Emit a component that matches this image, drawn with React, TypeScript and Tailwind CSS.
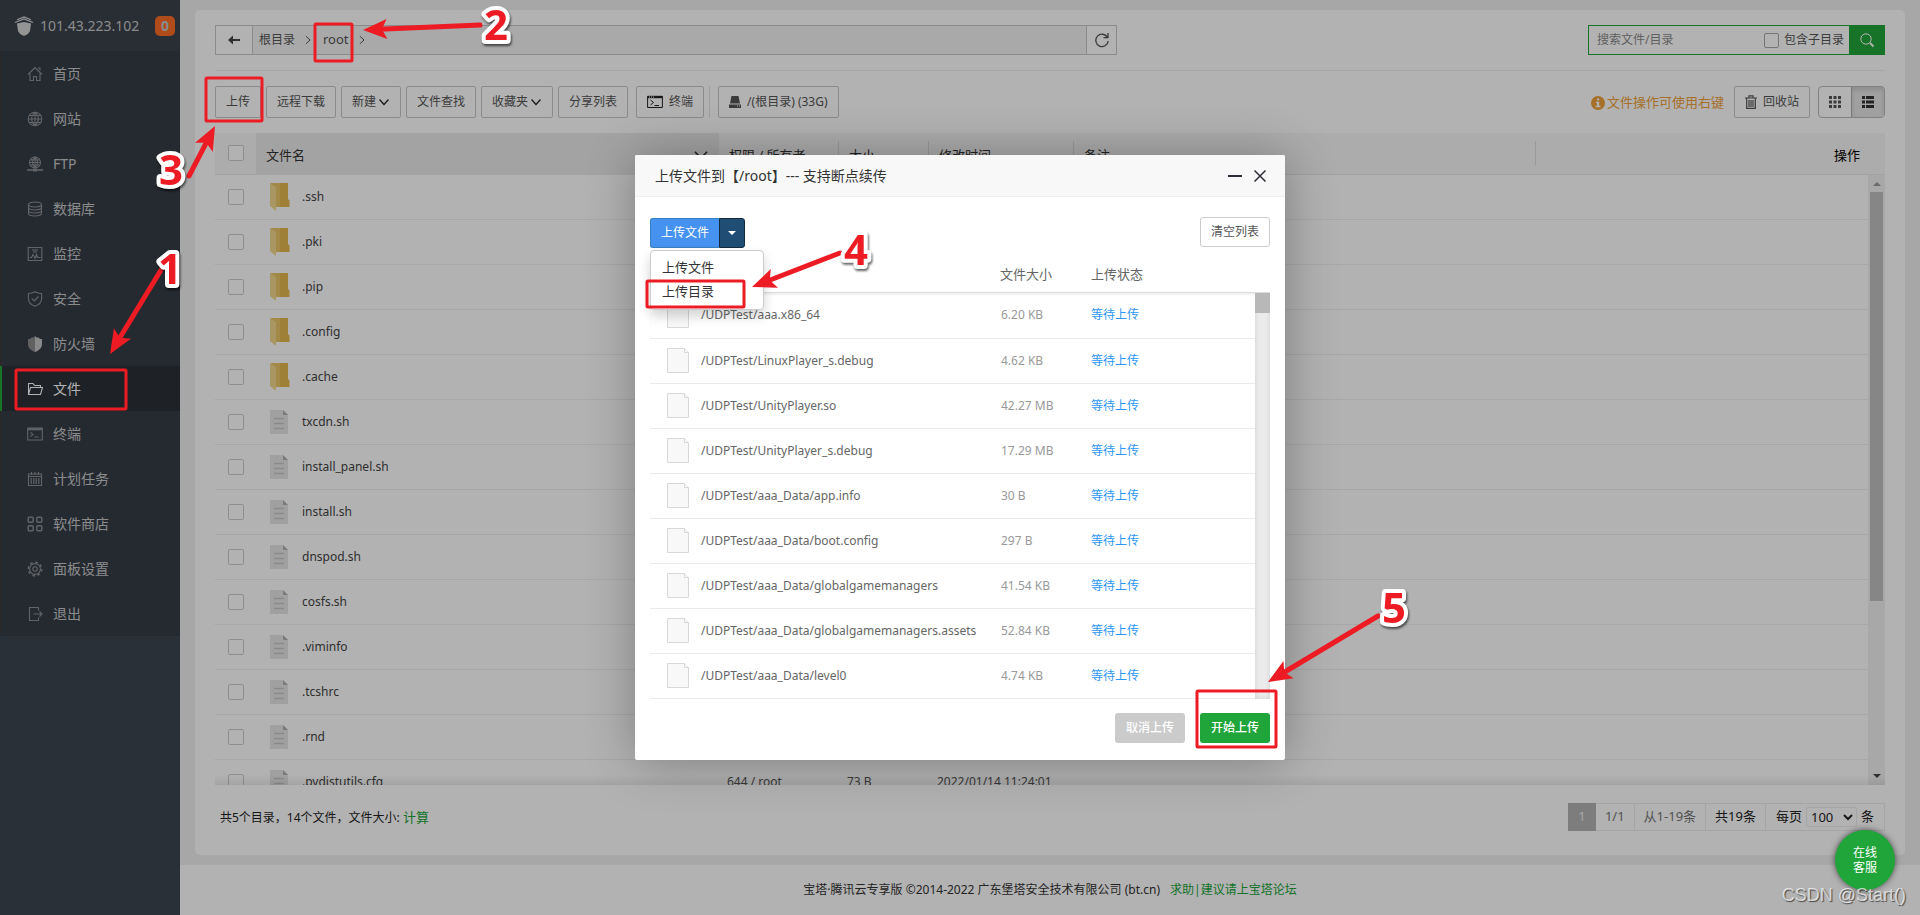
import { useState } from 'react';
import type { ReactNode } from 'react';
import { clsx } from 'clsx';

const menu = [
  { name: '首页', icon: 'home' },
  { name: '网站', icon: 'site' },
  { name: 'FTP', icon: 'ftp' },
  { name: '数据库', icon: 'database' },
  { name: '监控', icon: 'monitor' },
  { name: '安全', icon: 'safe' },
  { name: '防火墙', icon: 'firewall' },
  { name: '文件', icon: 'files' },
  { name: '终端', icon: 'terminal' },
  { name: '计划任务', icon: 'cron' },
  { name: '软件商店', icon: 'store' },
  { name: '面板设置', icon: 'settings' },
  { name: '退出', icon: 'exit' },
];

type FileRow = { name: string; dir?: boolean; owner?: string; size?: string; time?: string };

const files: FileRow[] = [
  { name: '.ssh', dir: true },
  { name: '.pki', dir: true },
  { name: '.pip', dir: true },
  { name: '.config', dir: true },
  { name: '.cache', dir: true },
  { name: 'txcdn.sh' },
  { name: 'install_panel.sh' },
  { name: 'install.sh' },
  { name: 'dnspod.sh' },
  { name: 'cosfs.sh' },
  { name: '.viminfo' },
  { name: '.tcshrc' },
  { name: '.rnd' },
  { name: '.pydistutils.cfg', owner: '644 / root', size: '73 B', time: '2022/01/14 11:24:01' },
];

const uploads = [
  { path: '/UDPTest/aaa.x86_64', size: '6.20 KB' },
  { path: '/UDPTest/LinuxPlayer_s.debug', size: '4.62 KB' },
  { path: '/UDPTest/UnityPlayer.so', size: '42.27 MB' },
  { path: '/UDPTest/UnityPlayer_s.debug', size: '17.29 MB' },
  { path: '/UDPTest/aaa_Data/app.info', size: '30 B' },
  { path: '/UDPTest/aaa_Data/boot.config', size: '297 B' },
  { path: '/UDPTest/aaa_Data/globalgamemanagers', size: '41.54 KB' },
  { path: '/UDPTest/aaa_Data/globalgamemanagers.assets', size: '52.84 KB' },
  { path: '/UDPTest/aaa_Data/level0', size: '4.74 KB' },
];

const menuIcons: Record<string, ReactNode> = {
  home: <path d="M1 8.5 8 1.5l7 7M3 7.5v7h3.5v-4h3v4H13v-7M11 2h2v2.5" />,
  site: <path d="M8 1.2a6.8 6.8 0 1 0 0 13.6A6.8 6.8 0 0 0 8 1.2ZM1.2 8h13.6M2.5 4.5h11M2.5 11.5h11M8 1.2v13.6M8 1.2c-4.5 4-4.5 9.6 0 13.6M8 1.2c4.5 4 4.5 9.6 0 13.6" />,
  ftp: (
    <>
      <path d="M8 1a5.5 5.5 0 1 0 0 11A5.5 5.5 0 0 0 8 1ZM2.5 6.5h11M3.5 4h9M3.5 9h9M8 1v11M8 1c-3.5 3.5-3.5 7.5 0 11M8 1c3.5 3.5 3.5 7.5 0 11" />
      <path d="M0 14h16" strokeWidth="1.6" />
      <path d="M6 14h4" strokeWidth="3" />
    </>
  ),
  database: <path d="M8 1C4.5 1 1.5 2 1.5 3.5S4.5 6 8 6s6.5-1 6.5-2.5S11.5 1 8 1ZM1.5 3.5v9C1.5 14 4.5 15 8 15s6.5-1 6.5-2.5v-9M1.5 6.5C1.5 8 4.5 9 8 9s6.5-1 6.5-2.5M1.5 9.5C1.5 11 4.5 12 8 12s6.5-1 6.5-2.5" />,
  monitor: <path d="M1.2 1.5h13.6v13H1.2ZM2.5 11.5h2l1.5-3 2 4 1.5-4 1 3h3M5 4h6M6 6h4" />,
  safe: <path d="M8 .8c2 1.2 4.5 1.7 6.6 1.7v5c0 3.800-3 6.500-6.600 7.700-3.600-1.200-6.600-3.900-6.600-7.700v-5C3.500 2.500 6 2 8 .8ZM4.800 7.500 7.300 10l4.200-4.500" />,
  firewall: (
    <>
      <path d="M8 0 6.500 1.500h-2L3 3H1v5c0 4 3 6.500 7 8Z" fill="#8b8b8b" stroke="none" />
      <path d="m8 0 1.500 1.500h2L13 3h2v5c0 4-3 6.500-7 8Z" fill="#c4c4c4" stroke="none" />
    </>
  ),
  files: <path d="M1.5 13.5V2.5H6l1.5 2h6v2M1.5 13.5l2-7h12l-2 7Z" />,
  terminal: (
    <>
      <path d="M.7 2h14.6v12H.7ZM3.5 6.5 6 8.5l-2.5 2M7.5 11h4" />
      <path d="M.7 3.2h14.6" strokeWidth="2.2" />
    </>
  ),
  cron: (
    <>
      <path d="M1.5 3h13v11.500h-13ZM1.500 5.500h13M4.500 1v3M8 1v3M11.500 1v3" />
      <path d="M3.500 8h9M3.500 10h9M3.500 12h9" strokeDasharray="1.500 1" strokeWidth="1.300" />
    </>
  ),
  store: (
    <g strokeWidth="1.4">
      <rect x="1.2" y="1.2" width="5" height="5" rx="1" />
      <rect x="9.8" y="1.2" width="5" height="5" rx="1" />
      <rect x="1.2" y="9.8" width="5" height="5" rx="1" />
      <rect x="9.8" y="9.8" width="5" height="5" rx="1" />
    </g>
  ),
  settings: (
    <>
      <circle cx="8" cy="8" r="5.4" />
      <circle cx="8" cy="8" r="2.2" />
      <circle cx="8" cy="8" r="6.7" strokeWidth="1.6" strokeDasharray="2.6 2.66" />
    </>
  ),
  exit: <path d="M11.5 4.5v-3h-9v13h9v-3M6.5 8H15M12.5 5.5 15 8l-2.5 2.5" />,
};

function MenuIcon({ name }: { name: string }) {
  return (
    <svg className="w-4 h-4 shrink-0" viewBox="0 0 16 16" fill="none" stroke="currentColor" strokeWidth="1.1">
      {menuIcons[name]}
    </svg>
  );
}

function Chevron({ className }: { className?: string }) {
  return (
    <svg className={clsx('shrink-0', className)} viewBox="0 0 12 12" fill="none" stroke="currentColor" strokeWidth="1.2">
      <path d="m1.5 3.5 4.5 5 4.5-5" />
    </svg>
  );
}

function FolderIcon() {
  return (
    <svg className="w-5 h-7" viewBox="0 0 20 28">
      <path d="M1 0h17v16l1.500 1.500V24H5Z" fill="#e2b84f" />
      <path d="M1 0h9v24H5Z" fill="#e8c567" />
      <path d="M0 0l6 4v24l-6-5Z" fill="#f3d88e" />
    </svg>
  );
}

function FileIcon() {
  return (
    <svg className="w-[18px] h-6" viewBox="0 0 18 24">
      <path d="M0 0h13l5 5v19H0Z" fill="#e6e6e6" />
      <path d="M13 0v5h5Z" fill="#b0b0b0" />
      <path d="M4 8.500h10M4 13.500h10M4 18.500h10" stroke="#c6c6c6" strokeWidth="1.400" />
    </svg>
  );
}

function BlankFileIcon() {
  return (
    <svg className="w-6 h-[25px]" viewBox="0 0 24 25" fill="#f8f8f8" stroke="#d8d8d8">
      <path d="M1.500.5h17l4 4v20h-21Z" />
      <path d="M18.500.5v4h4" />
    </svg>
  );
}

function TerminalIcon() {
  return (
    <svg className="w-4 h-4" viewBox="0 0 16 16" fill="none" stroke="#222">
      <path d="M.6 2.500h14.800v11H.6ZM3.500 6l3 2.500-3 2.500M7.500 11.500h4.500" />
      <path d="M.6 3h14.800" strokeWidth="2.400" />
      <path d="M2 3h1M4 3h1M6 3h1" stroke="#fff" />
    </svg>
  );
}

function DiskIcon() {
  return (
    <svg className="w-3 h-3" viewBox="0 0 12 12" fill="#555">
      <path d="M2.500 0h7L11 7.500H1ZM0 8.500h12V12H0Z" />
      <path d="M8 10h1M10 10h1" stroke="#fff" />
    </svg>
  );
}

function ToolButton({ children }: { children: ReactNode }) {
  return (
    <button className="h-8 px-[10px] flex items-center justify-center gap-[6px] border border-[#c8c8c8] rounded-xs bg-white text-xs text-[#555] whitespace-nowrap">
      {children}
    </button>
  );
}

const checkbox = 'block appearance-none w-4 h-4 border border-[#ccc] rounded-xs bg-white checked:bg-[#20a53a]';

function Sidebar() {
  return (
    <aside className="w-[180px] shrink-0 bg-[#3d4551] text-[#c8c8c8] text-sm">
      <div className="h-[51px] px-[5px] flex items-center bg-[#3c424c]">
        <svg className="w-5 h-5 ml-[9px]" viewBox="0 0 20 20" fill="#d5d5d5">
          <path d="M3 7.500 10 6l7 1.500L16 15c-1 2-3 4-6 5-3-1-5-3-6-5Z" />
          <path d="M1 6.500 10 3l9 3.500M3 3.800 10 1l7 2.800" fill="none" stroke="#d5d5d5" strokeWidth="1.200" />
        </svg>
        <span className="ml-[6px]">101.43.223.102</span>
        <span className="ml-auto w-5 h-5 rounded-[5px] bg-[#fc6d26] text-center leading-5 font-bold">0</span>
      </div>
      <nav>
        {menu.map(item => (
          <a key={item.name} href="#" className={clsx(
            'h-[45px] flex items-center gap-[10px] border-l-2',
            item.name === '文件' ? 'bg-[#2c3036] border-[#20a53a] text-white' : 'bg-[#363c46] border-[#3b3c40]',
          )}>
            <span className={clsx('pl-[25px]', item.name !== '文件' && 'text-[#8d8f92]')}><MenuIcon name={item.icon} /></span>
            {item.name}
          </a>
        ))}
      </nav>
    </aside>
  );
}

function PathBar() {
  const [search, setSearch] = useState('');
  return (
    <div className="flex items-center justify-between pb-[15px] border-b border-[#f0f0f0]">
      <div className="w-[902px] h-[30px] flex border border-[#c8c8c8] bg-[#f3f3f3] text-xs text-[#555]">
        <button className="w-[37px] bg-white border-r border-[#c8c8c8] flex items-center justify-center" aria-label="Back">
          <svg className="w-3 h-3" viewBox="0 0 12 12" fill="#444"><path d="M0 6 5 1.500V5h7v2H5v3.500Z" /></svg>
        </button>
        <div className="flex-1 flex items-center">
          <a href="#" className="pl-[6px]">根目录</a>
          <Chevron className="w-[10px] h-[10px] -rotate-90 ml-2 mr-[10px]" />
          <a href="#" className="text-[13px]">root</a>
          <Chevron className="w-[10px] h-[10px] -rotate-90 ml-2" />
        </div>
        <button className="w-[30px] bg-white border-l border-[#c8c8c8] flex items-center justify-center" aria-label="Refresh">
          <svg className="w-4 h-4" viewBox="0 0 16 16" fill="none" stroke="#555" strokeWidth="1.300">
            <path d="M13.500 5.500A6.200 6.200 0 1 0 14.200 9M14 1v4.700H9.500" />
          </svg>
        </button>
      </div>
      <div className="w-[297px] h-[30px] flex items-center border border-[#20a53a] text-xs text-[#555]">
        <input type="text" aria-label="搜索文件/目录" placeholder="搜索文件/目录" value={search} onChange={e => setSearch(e.target.value)}
          className="flex-1 min-w-0 pl-2 outline-none placeholder:text-[#8a8a8a]" />
        <label className="flex items-center gap-[5px] pr-[5px] whitespace-nowrap">
          <input type="checkbox" className="appearance-none w-[15px] h-[15px] border border-[#aaa] rounded-xs bg-white" />
          包含子目录
        </label>
        <button className="w-[35px] h-7 bg-[#20a53a] flex items-center justify-center" aria-label="Search">
          <svg className="w-4 h-4" viewBox="0 0 16 16" fill="none" stroke="#fff">
            <circle cx="7" cy="7" r="5.200" />
            <path d="m11 11 3.500 3.500" strokeWidth="2" />
          </svg>
        </button>
      </div>
    </div>
  );
}

function Toolbar() {
  return (
    <div className="py-[15px] flex items-center gap-[5px]">
      <ToolButton>上传</ToolButton>
      <ToolButton>远程下载</ToolButton>
      <ToolButton>新建<Chevron className="w-3 h-3 -ml-1 text-[#222]" /></ToolButton>
      <ToolButton>文件查找</ToolButton>
      <ToolButton>收藏夹<Chevron className="w-3 h-3 -ml-1 text-[#222]" /></ToolButton>
      <ToolButton>分享列表</ToolButton>
      <div className="ml-[3px] pr-[5px] mr-[3px] border-r border-[#e4e4e4]">
        <ToolButton><TerminalIcon />终端</ToolButton>
      </div>
      <ToolButton><DiskIcon />/(根目录) (33G)</ToolButton>
      <div className="ml-auto mr-[5px] pt-[2px] flex items-center gap-[2px] text-[13px] text-[#f0a13a]">
        <svg className="w-[14px] h-[14px]" viewBox="0 0 14 14">
          <circle cx="7" cy="7" r="7" fill="currentColor" />
          <path d="M6 2.500h2.200v2H6ZM5 5.800h3.200v4H9.500v1.400h-5V9.800H6V7.200H5Z" fill="#fff" />
        </svg>
        文件操作可使用右键
      </div>
      <ToolButton>
        <svg className="w-3 h-[14px]" viewBox="0 0 12 14" fill="none" stroke="#555" strokeWidth="1.200">
          <path d="M0 3h12M4 3V.8h4V3M1.700 3v10.300h8.600V3M4 5v7M6 5v7M8 5v7" />
        </svg>
        回收站
      </ToolButton>
      <div className="ml-[3px] h-8 flex border border-[#bbb] rounded-sm">
        <button className="w-8 flex items-center justify-center" aria-label="Icon view">
          <svg className="w-3 h-3" viewBox="0 0 12 12" stroke="#555" strokeWidth="3" strokeDasharray="3 1.500"><path d="M0 1.500h12M0 6h12M0 10.500h12" /></svg>
        </button>
        <button className="w-[33px] flex items-center justify-center bg-[#e6e6e6] border-l border-[#adadad] shadow-[inset_0_3px_5px_rgba(0,0,0,0.125)]" aria-label="List view">
          <svg className="w-3 h-3" viewBox="0 0 12 12" stroke="#333" strokeWidth="3"><path d="M0 1.500h3M4 1.500h8M0 6h3M4 6h8M0 10.500h3M4 10.500h8" /></svg>
        </button>
      </div>
    </div>
  );
}

const headCell = 'border-r border-[#ddd] h-[25px] pt-1 pl-[10px] flex items-center';

function FileTable() {
  return (
    <div className="flex-1 min-h-0 flex flex-col">
      <table className="w-full table-fixed text-[13px] text-[#333]">
        <thead>
          <tr className="h-[41px] bg-[#f6f6f6] border-b border-[#e8e8e8] text-left">
            <th className="w-[41px] font-normal"><input type="checkbox" aria-label="Select all" className={clsx(checkbox, 'ml-[13px]')} /></th>
            <th className="w-[463px] font-normal bg-[#eaeaea] px-[10px]">
              <div className="pt-1 flex items-center justify-between">文件名<Chevron className="w-4 h-4" /></div>
            </th>
            <th className="w-[120px] font-normal"><div className={headCell}>权限 / 所有者</div></th>
            <th className="w-[90px] font-normal"><div className={headCell}>大小</div></th>
            <th className="w-[145px] font-normal"><div className={headCell}>修改时间</div></th>
            <th className="w-[462px] font-normal"><div className={headCell}>备注</div></th>
            <th className="pt-1 pr-[25px] text-right font-normal text-black">操作</th>
          </tr>
        </thead>
      </table>
      <div className="relative flex-1 min-h-0 flex overflow-hidden">
        <div className="flex-1 overflow-hidden">
          <table className="w-full table-fixed text-xs text-[#555]">
            <tbody>
              {files.map(f => (
                <tr key={f.name} className="h-[45px] border-b border-[#f0f0f0]">
                  <td className="w-[41px]"><input type="checkbox" aria-label={f.name} className={clsx(checkbox, 'ml-[13px]')} /></td>
                  <td className="w-[463px]">
                    <div className="flex items-center">
                      <span className="w-[46px] pl-[14px] shrink-0">{f.dir ? <FolderIcon /> : <FileIcon />}</span>
                      <a href="#" className="text-[#444]">{f.name}</a>
                    </div>
                  </td>
                  <td className="w-[120px] pl-2">{f.owner}</td>
                  <td className="w-[90px] pl-2">{f.size}</td>
                  <td className="w-[145px] pl-2">{f.time}</td>
                  <td />
                </tr>
              ))}
            </tbody>
          </table>
        </div>
        <div className="w-[17px] bg-[#f1f1f1] flex flex-col items-center">
          <svg className="w-2 h-[17px]" viewBox="0 0 8 17" fill="#999"><path d="m4 7 4 4H0Z" /></svg>
          <div className="w-[13px] flex-1"><div className="h-[71%] bg-[#c1c1c1]" /></div>
          <svg className="w-2 h-[17px]" viewBox="0 0 8 17" fill="#444"><path d="M0 6h8l-4 4Z" /></svg>
        </div>
        <div className="absolute inset-x-0 bottom-0 h-[10px] bg-linear-to-t from-black/8 to-transparent" />
      </div>
    </div>
  );
}

function Pager() {
  const cell = 'px-[9px] flex items-center border-r border-[#ececec]';
  return (
    <div className="h-[70px] pb-[6px] flex items-center justify-between text-[#222]">
      <p className="pl-[5px] pt-[1px] text-xs">共5个目录，14个文件，文件大小: <a href="#" className="text-[13px] text-[#20a53a]">计算</a></p>
      <div className="h-7 flex border border-r-0 border-[#ececec] text-[13px] text-[#777]">
        <span className="w-7 -m-px mr-0 flex items-center justify-center bg-[#b4b4b4] text-[#eee]">1</span>
        <span className={cell}>1/1</span>
        <span className={cell}>从1-19条</span>
        <span className={clsx(cell, 'text-[#222]')}>共19条</span>
        <label className="px-[10px] flex items-center gap-1 border-r border-[#ececec] text-[#222]">
          每页
          <span className="relative flex items-center">
            <select defaultValue="100" className="appearance-none w-[51px] h-5 pl-1 border border-[#ececec] rounded-xs">
              <option>100</option>
            </select>
            <svg className="absolute right-1 w-[10px] h-[10px] pointer-events-none" viewBox="0 0 10 10" fill="none" stroke="#222" strokeWidth="2"><path d="m1 3 4 4 4-4" /></svg>
          </span>
          条
        </label>
      </div>
    </div>
  );
}

function UploadDialog() {
  return (
    <div role="dialog" className="w-[650px] h-[605px] flex flex-col bg-white rounded-xs shadow-[1px_1px_50px_rgba(0,0,0,0.3)]">
      <div className="h-[42px] pt-px pl-5 pr-[19px] flex items-center bg-[#f8f8f8] border-b border-[#eee] rounded-t-xs text-sm text-[#333]">
        <h2 className="flex-1">上传文件到【/root】--- 支持断点续传</h2>
        <button className="w-[14px] h-[14px] flex items-center" aria-label="Minimize"><span className="w-full h-[2px] bg-[#2e2d3c]" /></button>
        <button className="ml-3" aria-label="Close">
          <svg className="w-3 h-3" viewBox="0 0 12 12" stroke="#2e2d3c" strokeWidth="1.500"><path d="m.5.5 11 11M11.500.5l-11 11" /></svg>
        </button>
      </div>
      <div className="flex-1 px-[15px] pt-5 flex flex-col">
        <div className="flex justify-between">
          <div className="relative h-[30px] mt-px flex text-xs text-white">
            <button className="w-[69px] bg-[#4592f0] border border-r-0 border-[#3580be] rounded-l-[3px]">上传文件</button>
            <button className="w-[26px] flex items-center justify-center bg-[#204d74] border border-[#122b40] rounded-r-[3px]" aria-label="More">
              <svg className="w-2 h-1" viewBox="0 0 8 4" fill="#fff"><path d="M0 0h8L4 4Z" /></svg>
            </button>
            <ul className="absolute z-10 left-0 top-8 w-[114px] h-[60px] pt-1 bg-white border border-[#ccc] rounded-sm shadow-[0_6px_12px_rgba(0,0,0,0.175)] text-[13px] leading-6 text-[#333]">
              <li><a href="#" className="block px-[11px]">上传文件</a></li>
              <li><a href="#" className="block px-[11px]">上传目录</a></li>
            </ul>
          </div>
          <button className="h-[30px] w-[70px] border border-[#ccc] rounded-[3px] text-xs text-[#555]">清空列表</button>
        </div>
        <div className="h-[45px] pt-[10px] flex items-center border-b border-[#ddd] text-[13px] text-[#666]">
          <span className="w-[441px] pl-[350px]">文件大小</span>
          <span>上传状态</span>
        </div>
        <div className="flex shadow-[inset_0_2px_2px_rgba(0,0,0,0.06)]">
          <table className="flex-1 table-fixed text-xs text-[#666]">
            <tbody>
              {uploads.map(u => (
                <tr key={u.path} className="h-[45px] border-b border-[#ebebeb]">
                  <td className="w-[351px]">
                    <div className="pl-4 flex items-center gap-[11px] whitespace-nowrap"><BlankFileIcon />{u.path}</div>
                  </td>
                  <td className="w-[90px] text-[#999]">{u.size}</td>
                  <td className="w-[164px] text-[#2d96f5]">等待上传</td>
                </tr>
              ))}
            </tbody>
          </table>
          <div className="w-[15px] bg-[#ebebeb] shadow-[inset_0_0_5px_rgba(0,0,0,0.12)]">
            <div className="h-5 bg-[#b8b8b8]" />
          </div>
        </div>
        <div className="mt-[14px] flex justify-end gap-[15px] text-xs font-medium text-white">
          <button className="w-[70px] h-[30px] rounded-[3px] bg-[#cbcbcb]">取消上传</button>
          <button className="w-[70px] h-[30px] rounded-[3px] bg-[#20a53a]">开始上传</button>
        </div>
      </div>
    </div>
  );
}

// numbered steps drawn over the page
const steps = [
  { n: '1', x: 158, y: 284, box: [16, 370, 110, 39], from: [161, 270], to: [110, 354] },
  { n: '2', x: 484, y: 40, box: [315, 24, 37, 37], from: [480, 25], to: [363, 30] },
  { n: '3', x: 159, y: 185, box: [206, 78, 56, 43], from: [189, 176], to: [215, 126] },
  { n: '4', x: 844, y: 265, box: [647, 281, 97, 26], from: [840, 253], to: [752, 287] },
  { n: '5', x: 1382, y: 623, box: [1197, 691, 79, 56], from: [1378, 616], to: [1268, 682] },
];

function Steps() {
  return (
    <svg className="absolute z-20 inset-0 w-[1920px] h-[915px] pointer-events-none" viewBox="0 0 1920 915" fill="none" stroke="#ed1c24">
      {steps.map(s => {
        const [x1, y1] = s.from;
        const [x2, y2] = s.to;
        const len = Math.hypot(x2 - x1, y2 - y1);
        const angle = (Math.atan2(y2 - y1, x2 - x1) * 180) / Math.PI;
        return (
          <g key={s.n}>
            <rect x={s.box[0]} y={s.box[1]} width={s.box[2]} height={s.box[3]} strokeWidth="3" rx="1" />
            <g transform={`translate(${x1} ${y1}) rotate(${angle})`}>
              <path d={`M0 0H${len - 16}`} strokeWidth="5" strokeLinecap="round" />
              <path d={`M${len} 0l-24 -10 5 10 -5 10Z`} fill="#ed1c24" stroke="none" />
            </g>
            <text x={s.x} y={s.y} fontSize="42" fill="#ed1c24" stroke="#fff" strokeWidth="8" strokeLinejoin="round" paintOrder="stroke"
              className="font-bold drop-shadow-[1px_2px_1px_rgba(0,0,0,0.6)]">{s.n}</text>
          </g>
        );
      })}
    </svg>
  );
}

export default function App() {
  return (
    <div className="relative h-screen flex overflow-hidden bg-[#f0f0f1] font-['Noto_Sans','Noto_Sans_CJK_SC',sans-serif]">
      <Sidebar />
      <div className="flex-1 min-w-0 flex flex-col">
        <main className="flex-1 min-h-0 mx-[15px] my-[10px] px-5 pt-[15px] flex flex-col bg-white rounded-[5px]">
          <PathBar />
          <Toolbar />
          <FileTable />
          <Pager />
        </main>
        <footer className="h-[50px] flex items-center justify-center gap-[10px] bg-white text-xs text-[#333]">
          <span>宝塔·腾讯云专享版 ©2014-2022 广东堡塔安全技术有限公司 (bt.cn)</span>
          <a href="#" className="text-[#20a53a]">求助|建议请上宝塔论坛</a>
        </footer>
      </div>

      <div className="absolute inset-0 flex items-center justify-center bg-black/30">
        <UploadDialog />
      </div>
      <a href="#" className="absolute right-[25px] bottom-[25px] w-[60px] h-[60px] px-4 flex items-center rounded-full bg-[#20a53a] text-white text-xs leading-[15px] text-center shadow-[0_0_6px_rgba(0,0,0,0.6)]">
        在线客服
      </a>
      <Steps />
      <div className="absolute right-[14px] bottom-[5px] font-['Liberation_Sans',sans-serif] text-lg leading-[30px] text-white/70 [text-shadow:1px_1px_1px_rgba(0,0,0,0.6)]">CSDN @Start()</div>
    </div>
  );
}
